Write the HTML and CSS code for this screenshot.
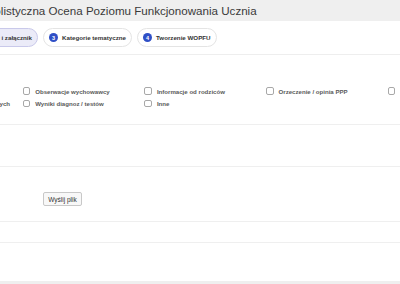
FILE: index.html
```html
<!DOCTYPE html>
<html lang="pl">
<head>
<meta charset="utf-8">
<link rel="stylesheet" href="styles.css">
</head>
<body>
<header class="topbar">
  <h1 class="title">Holistyczna Ocena Poziomu Funkcjonowania Ucznia</h1>
</header>
<nav class="tabs">
  <div class="pill active"><span class="num">2</span><span class="label">Dokumenty i załącznik</span></div>
  <div class="pill"><span class="num">3</span><span class="label">Kategorie tematyczne</span></div>
  <div class="pill"><span class="num">4</span><span class="label">Tworzenie WOPFU</span></div>
</nav>
<section class="row row-checks">
  <div class="checks">
    <label class="check"><span class="box"></span>Dokumentacja szkolna</label>
    <label class="check"><span class="box"></span>Obserwacje wychowawcy</label>
    <label class="check"><span class="box"></span>Informacje od rodziców</label>
    <label class="check"><span class="box"></span>Orzeczenie / opinia PPP</label>
    <label class="check"><span class="box"></span>Opinie nauczycieli</label>
    <label class="check"><span class="box"></span>Notatki z zajęć psychologicznych</label>
    <label class="check"><span class="box"></span>Wyniki diagnoz / testów</label>
    <label class="check"><span class="box"></span>Inne</label>
  </div>
</section>
<section class="row row-b"></section>
<section class="row row-upload">
  <button class="btn" type="button">Wyślij plik</button>
</section>
<section class="row row-d"></section>
<section class="row row-e"></section>
<footer class="bottom"></footer>
</body>
</html>
```
FILE: styles.css
```css
html, body {
  margin: 0;
  padding: 0;
  background: #ffffff;
}
body {
  width: 400px;
  height: 284px;
  overflow: hidden;
  font-family: "Liberation Sans", Arial, sans-serif;
  color: #333;
}
.topbar {
  height: 21px;
  background: #efefef;
  overflow: hidden;
}
.title {
  margin: 0 0 0 -14px;
  font-size: 11.6px;
  font-weight: normal;
  line-height: 21px;
  color: #3a3a3a;
  white-space: nowrap;
}
.tabs {
  display: flex;
  gap: 5px;
  margin-left: -53px;
  padding: 7px 0 7px;
  border-bottom: 1px solid #eeeeee;
  white-space: nowrap;
}
.pill {
  box-sizing: border-box;
  height: 19px;
  display: flex;
  align-items: center;
  gap: 4px;
  padding: 0 5px;
  border: 1px solid #e4e4e4;
  border-radius: 10px;
  background: #fff;
  flex: none;
}
.pill.active {
  background: #ebebf8;
  border-color: #c9c9ea;
}
.num {
  width: 9px;
  height: 9px;
  border-radius: 50%;
  background: #2f4fc6;
  color: #fff;
  font-size: 5.5px;
  font-weight: bold;
  display: flex;
  align-items: center;
  justify-content: center;
}
.label {
  font-size: 6.2px;
  font-weight: bold;
  color: #333;
}
.row {
  border-bottom: 1px solid #efefef;
  box-sizing: border-box;
}
.row-checks {
  height: 70px;
  padding-top: 30px;
  overflow: hidden;
}
.checks {
  margin-left: -99px;
  display: grid;
  grid-template-columns: repeat(5, 121.7px);
  grid-auto-rows: 12.3px;
  width: 620px;
}
.check {
  display: flex;
  align-items: center;
  gap: 5px;
  font-size: 6.1px;
  font-weight: bold;
  color: #5a5a5a;
  white-space: nowrap;
}
.box {
  box-sizing: border-box;
  width: 7.5px;
  height: 7.5px;
  border: 1px solid #a8a8a8;
  border-radius: 2px;
  background: #fff;
  flex: none;
}
.row-b {
  height: 42px;
}
.row-upload {
  height: 55px;
  padding: 25px 0 0 43px;
}
.btn {
  box-sizing: border-box;
  height: 14px;
  width: 39px;
  padding: 0;
  border: 1px solid #c8c8c8;
  border-radius: 2px;
  background: #f8f8f8;
  font-family: "Liberation Sans", Arial, sans-serif;
  font-size: 6.5px;
  color: #333;
  display: block;
}
.row-d {
  height: 21px;
}
.row-e {
  height: 38px;
  border-bottom: none;
}
.bottom {
  height: 10px;
  background: #efefef;
}
```
